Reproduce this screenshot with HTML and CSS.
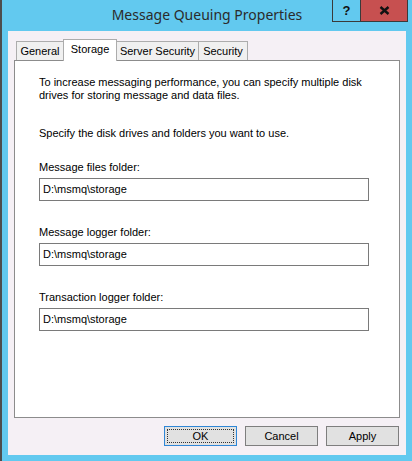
FILE: index.html
```html
<!DOCTYPE html>
<html>
<head>
<meta charset="utf-8">
<link rel="stylesheet" href="styles.css">
</head>
<body>
<div class="window">
  <div class="titlebar">
    <div class="spacer"></div>
    <div class="title">Message Queuing Properties</div>
    <div class="caption-buttons">
      <div class="cbtn help">?</div>
      <div class="cbtn close">
        <svg width="11" height="9" viewBox="0 0 11 9"><path d="M1.5 1 L9.5 8 M9.5 1 L1.5 8" stroke="#111" stroke-width="2.4" fill="none"/></svg>
      </div>
    </div>
  </div>
  <div class="client">
    <div class="tabs">
      <div class="tab t-general">General</div>
      <div class="tab selected t-storage">Storage</div>
      <div class="tab t-server">Server Security</div>
      <div class="tab t-security">Security</div>
    </div>
    <div class="panel">
      <p class="intro">To increase messaging performance, you can specify multiple disk drives for storing message and data files.</p>
      <p class="specify">Specify the disk drives and folders you want to use.</p>
      <div class="field">
        <div class="label">Message files folder:</div>
        <div class="input">D:\msmq\storage</div>
      </div>
      <div class="field">
        <div class="label">Message logger folder:</div>
        <div class="input">D:\msmq\storage</div>
      </div>
      <div class="field">
        <div class="label">Transaction logger folder:</div>
        <div class="input">D:\msmq\storage</div>
      </div>
    </div>
    <div class="buttons">
      <div class="btn default"><span class="focus">OK</span></div>
      <div class="btn">Cancel</div>
      <div class="btn">Apply</div>
    </div>
  </div>
</div>
</body>
</html>
```

FILE: styles.css
```css
html, body {
  margin: 0;
  padding: 0;
}
body {
  font-family: "Liberation Sans", Arial, sans-serif;
  font-size: 11px;
  color: #000;
}
.window {
  width: 412px;
  height: 461px;
  box-sizing: border-box;
  background: #62c9ef;
  border-left: 2px solid #4d4d4d;
  display: flex;
  flex-direction: column;
}
.titlebar {
  height: 31px;
  flex: none;
  display: grid;
  grid-template-columns: 1fr auto 1fr;
  align-items: start;
}
.title {
  font-family: "Noto Sans", "Open Sans", sans-serif;
  font-size: 14px;
  line-height: 18px;
  padding-top: 6px;
  color: #2b2b2b;
  white-space: nowrap;
}
.caption-buttons {
  justify-self: end;
  margin-right: 4px;
  display: flex;
  border: 1px solid #3a3a3a;
  border-top: none;
  height: 21px;
}
.cbtn {
  display: flex;
  align-items: center;
  justify-content: center;
}
.help {
  width: 27px;
  font-weight: bold;
  font-size: 13px;
  color: #111;
  border-right: 1px solid #3a3a3a;
}
.close {
  width: 46px;
  background: #c75050;
}
.client {
  flex: 1;
  margin: 0 6px 6px 6px;
  background: #f5f0f5;
  display: flex;
  flex-direction: column;
}
.tabs {
  display: flex;
  align-items: flex-end;
  margin-top: 8px;
  padding-left: 8px;
  height: 21px;
}
.tab {
  box-sizing: border-box;
  height: 19px;
  line-height: 18px;
  text-align: center;
  border: 1px solid #acacac;
  border-bottom: none;
  background: #f0f0f0;
  margin-right: -1px;
  white-space: nowrap;
}
.t-general { width: 48px; }
.t-storage { width: 54px; }
.t-server { width: 83px; }
.t-security { width: 50px; }
.tab.selected {
  height: 22px;
  line-height: 18px;
  background: #fff;
  margin-bottom: -1px;
  position: relative;
  z-index: 1;
}
.panel {
  flex: 1;
  margin: 0 6px;
  background: #fff;
  border: 1px solid #8c8c8c;
  padding: 15px 24px 0 24px;
  line-height: 13px;
}
.panel p {
  margin: 0;
}
.intro {
  width: 335px;
}
.specify {
  margin-top: 25px !important;
}
.field {
  margin-top: 21px;
}
.field + .field {
  margin-top: 25px;
}
.label {
  height: 13px;
  margin-bottom: 4px;
}
.input {
  width: 330px;
  height: 23px;
  box-sizing: border-box;
  border: 1px solid #7a7a7a;
  padding-left: 3px;
  line-height: 21px;
  background: #fff;
}
.buttons {
  display: flex;
  justify-content: flex-end;
  gap: 8px;
  margin: 8px 7px 9px 0;
}
.btn {
  width: 73px;
  height: 20px;
  box-sizing: border-box;
  border: 1px solid #7e7e7e;
  background: #e1e1e1;
  display: flex;
  align-items: center;
  justify-content: center;
}
.btn.default {
  border-color: #2f86d6;
  padding: 2px;
}
.focus {
  flex: 1;
  align-self: stretch;
  border: 1px dotted #333;
  display: flex;
  align-items: center;
  justify-content: center;
}
```
